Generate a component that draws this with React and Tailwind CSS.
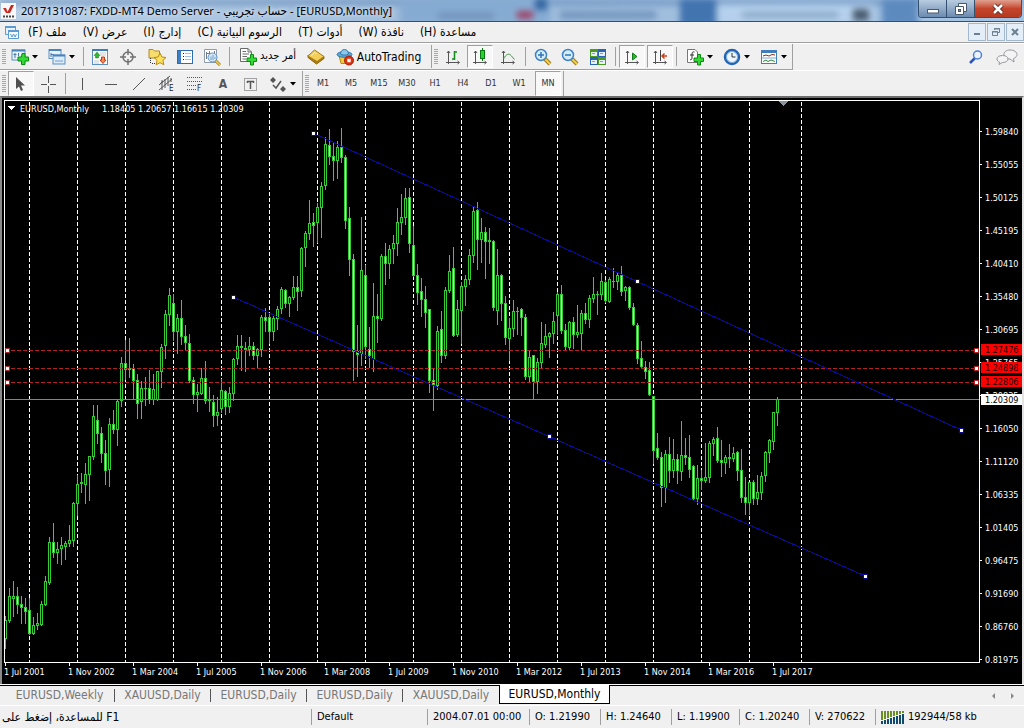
import React from 'react';

// [high, body top, body bottom, low, bearish] for each month, oldest first
const candles = [
  [616, 620, 638, 648, 0], [588, 596, 620, 622, 0], [581, 596, 598, 616, 0], [587, 596, 604, 613, 1],
  [596, 604, 607, 623, 1], [598, 607, 611, 623, 1], [598, 610, 633, 634, 1], [617, 625, 633, 634, 0],
  [613, 623, 625, 629, 0], [601, 604, 624, 625, 0], [576, 581, 604, 605, 0], [537, 542, 582, 584, 0],
  [523, 542, 552, 557, 1], [542, 549, 552, 563, 0], [537, 545, 548, 564, 0], [541, 543, 546, 559, 0],
  [525, 540, 543, 546, 0], [502, 503, 540, 546, 0], [475, 484, 503, 515, 0], [473, 482, 483, 492, 1],
  [463, 474, 484, 503, 0], [456, 456, 474, 500, 0], [405, 416, 456, 459, 0], [405, 420, 433, 443, 1],
  [427, 433, 453, 462, 1], [440, 453, 470, 484, 1], [418, 424, 469, 486, 0], [410, 424, 429, 433, 1],
  [400, 401, 429, 445, 0], [357, 363, 400, 406, 0], [340, 363, 369, 379, 1], [338, 368, 369, 377, 1],
  [364, 368, 380, 399, 1], [374, 380, 403, 418, 1], [381, 388, 401, 418, 0], [377, 388, 388, 405, 1],
  [370, 388, 399, 403, 1], [374, 389, 399, 404, 0], [371, 371, 399, 400, 0], [344, 347, 371, 387, 0],
  [310, 314, 345, 358, 0], [288, 295, 314, 325, 0], [294, 303, 331, 340, 1], [314, 318, 331, 353, 0],
  [300, 318, 336, 344, 1], [325, 336, 342, 350, 1], [334, 343, 380, 382, 1], [377, 380, 394, 403, 1],
  [384, 392, 394, 411, 0], [368, 378, 393, 394, 0], [361, 378, 400, 403, 1], [387, 399, 400, 411, 1],
  [395, 402, 415, 426, 1], [397, 412, 415, 425, 0], [379, 390, 408, 412, 0], [390, 391, 406, 414, 1],
  [387, 393, 406, 412, 0], [358, 359, 393, 400, 0], [335, 346, 358, 364, 0], [335, 346, 347, 370, 1],
  [342, 348, 349, 371, 1], [337, 346, 349, 355, 0], [342, 346, 355, 359, 1], [348, 349, 355, 368, 0],
  [315, 317, 349, 356, 0], [308, 317, 320, 331, 1], [313, 317, 331, 343, 1], [316, 318, 331, 340, 0],
  [306, 309, 318, 329, 0], [287, 289, 308, 313, 0], [289, 290, 303, 307, 1], [296, 297, 303, 316, 0],
  [276, 287, 297, 299, 0], [276, 287, 291, 310, 1], [247, 248, 290, 296, 0], [231, 233, 247, 266, 0],
  [200, 223, 233, 239, 0], [213, 222, 225, 246, 1], [203, 207, 222, 242, 0], [182, 186, 207, 237, 0],
  [137, 144, 185, 189, 0], [129, 145, 156, 164, 1], [143, 156, 160, 180, 1], [141, 147, 160, 178, 0],
  [128, 147, 157, 162, 1], [155, 157, 220, 228, 1], [207, 218, 259, 275, 1], [254, 259, 351, 380, 1],
  [325, 351, 354, 376, 1], [217, 270, 353, 365, 0], [265, 275, 346, 358, 1], [327, 349, 355, 367, 1],
  [283, 316, 358, 371, 0], [294, 316, 318, 342, 1], [254, 256, 318, 320, 0], [243, 256, 263, 284, 1],
  [245, 249, 263, 278, 0], [235, 243, 248, 263, 0], [208, 222, 243, 255, 0], [194, 217, 222, 234, 0],
  [188, 198, 217, 224, 0], [188, 197, 243, 252, 1], [226, 245, 275, 276, 1], [264, 275, 292, 304, 1],
  [278, 291, 299, 316, 1], [286, 299, 312, 327, 1], [309, 309, 380, 392, 1], [369, 380, 384, 410, 1],
  [326, 331, 385, 389, 0], [311, 329, 355, 362, 1], [287, 290, 355, 358, 0], [255, 271, 290, 292, 0],
  [247, 268, 335, 336, 1], [300, 309, 334, 336, 0], [282, 286, 310, 343, 0], [275, 279, 286, 305, 0],
  [249, 255, 279, 284, 0], [207, 211, 255, 262, 0], [202, 210, 239, 269, 1], [218, 232, 239, 262, 0],
  [227, 232, 241, 278, 1], [228, 240, 241, 263, 1], [240, 241, 307, 310, 1], [249, 275, 310, 324, 0],
  [274, 275, 303, 320, 1], [296, 303, 337, 344, 1], [318, 328, 338, 360, 0], [300, 311, 328, 336, 0],
  [307, 311, 311, 334, 1], [308, 309, 317, 335, 1], [314, 317, 376, 379, 1], [351, 357, 376, 382, 0],
  [355, 355, 381, 399, 1], [358, 362, 381, 393, 0], [322, 343, 362, 368, 0], [324, 336, 344, 347, 0],
  [332, 333, 336, 357, 0], [312, 321, 333, 343, 0], [292, 294, 315, 334, 0], [285, 294, 330, 333, 1],
  [324, 330, 346, 350, 1], [321, 322, 347, 350, 0], [317, 322, 334, 348, 1], [305, 332, 334, 337, 0],
  [310, 313, 333, 350, 0], [303, 313, 319, 323, 1], [295, 298, 319, 327, 0], [277, 294, 298, 302, 0],
  [291, 294, 294, 314, 1], [273, 281, 294, 299, 0], [280, 282, 300, 302, 1], [277, 279, 301, 302, 0],
  [268, 281, 281, 287, 1], [273, 275, 281, 289, 0], [266, 275, 291, 295, 1], [286, 287, 290, 300, 0],
  [286, 287, 307, 309, 1], [303, 307, 324, 325, 1], [323, 325, 358, 363, 1], [341, 358, 366, 368, 1],
  [361, 367, 371, 378, 1], [362, 370, 394, 395, 1], [396, 396, 450, 463, 1], [433, 448, 457, 459, 1],
  [452, 457, 487, 506, 1], [450, 454, 487, 502, 0], [437, 454, 470, 482, 1], [439, 459, 470, 477, 0],
  [454, 459, 470, 483, 1], [421, 455, 471, 480, 0], [438, 455, 457, 464, 1], [435, 457, 469, 477, 1],
  [465, 466, 498, 500, 1], [465, 478, 498, 504, 0], [470, 478, 480, 489, 1], [443, 477, 480, 482, 0],
  [441, 443, 477, 482, 0], [437, 439, 443, 455, 0], [427, 438, 460, 462, 1], [440, 460, 462, 476, 1],
  [455, 457, 462, 473, 0], [444, 457, 458, 467, 1], [447, 453, 458, 461, 0], [451, 452, 470, 480, 1],
  [449, 470, 497, 502, 1], [477, 497, 502, 514, 1], [482, 482, 502, 514, 0], [480, 482, 498, 504, 1],
  [475, 492, 498, 504, 0], [472, 476, 492, 499, 0], [451, 452, 475, 481, 0], [439, 440, 452, 462, 0],
  [412, 412, 441, 449, 0], [397, 399, 412, 425, 0],
];

const gridX = [29, 77, 125, 173, 221, 269, 317, 365, 413, 461, 509, 557, 605, 653, 701, 749, 801];

const prices = [
  '1.59840', '1.55055', '1.50125', '1.45195', '1.40410', '1.35480', '1.30695', '1.25765', '1.20835',
  '1.16050', '1.11120', '1.06335', '1.01405', '0.96475', '0.91690', '0.86760', '0.81975',
];

const dates = [
  '1 Jul 2001', '1 Nov 2002', '1 Mar 2004', '1 Jul 2005', '1 Nov 2006', '1 Mar 2008', '1 Jul 2009',
  '1 Nov 2010', '1 Mar 2012', '1 Jul 2013', '1 Nov 2014', '1 Mar 2016', '1 Jul 2017',
];

const levels = [
  { y: 350, price: '1.27476' },
  { y: 368, price: '1.24898' },
  { y: 382, price: '1.22806' },
];

const channels = [
  [[313, 133], [637, 281], [961, 430]],
  [[233, 297], [549, 436], [865, 576]],
];

const Chart = () => (
  <svg
    viewBox="2 98 1020 586"
    className="block w-full bg-black text-[9px] font-['DejaVu_Sans_Condensed','DejaVu_Sans',sans-serif]"
    role="img"
    aria-label="EURUSD monthly chart"
  >
    <g shapeRendering="crispEdges">
      {gridX.map((x) => (
        <line key={x} x1={x + 0.5} x2={x + 0.5} y1="102" y2="662" stroke="#fff" strokeDasharray="4 2" />
      ))}
      {candles.map(([high, top, bottom, low, bear], i) => {
        const x = 5 + i * 4;
        return (
          <g key={x}>
            <rect x={x} y={high} width="1" height={low - high + 1} fill="#46c846" />
            <rect x={x - 1} y={top} width="3" height={bottom - top + 1} fill="#32cd32" />
            {bottom - top > 1 && (
              <rect x={x} y={top + 1} width="1" height={bottom - top - 1} fill={bear ? '#c4f5c0' : '#000'} />
            )}
          </g>
        );
      })}
      {levels.map(({ y }) => (
        <line key={y} x1="5" x2="979" y1={y + 0.5} y2={y + 0.5} stroke="#b22222" strokeDasharray="4 2" />
      ))}
      <rect x="5" y="399" width="974" height="1" fill="#778899" />
      {channels.map(([a, , c]) => (
        <line key={a[0]} x1={a[0]} y1={a[1]} x2={c[0]} y2={c[1]} stroke="#0a0aa8" />
      ))}
      {channels.flat().map(([x, y]) => (
        <g key={x}>
          <rect x={x - 2} y={y - 2} width="5" height="5" fill="#0a0a9a" />
          <rect x={x - 1} y={y - 1} width="3" height="3" fill="#fff" />
        </g>
      ))}
      {levels.map(({ y }) => (
        <g key={y} fill="#fff">
          <rect x="5" y={y - 2} width="5" height="5" fill="#b22222" />
          <rect x="6" y={y - 1} width="3" height="3" />
          <rect x="974" y={y - 2} width="5" height="5" fill="#b22222" />
          <rect x="975" y={y - 1} width="3" height="3" />
        </g>
      ))}
      <path d="M4.5 662.5V100.5H979.5V662.5Z" fill="none" stroke="#fff" />
      <path d="M778 101H788L783 106Z" fill="#8a939c" />
      <path d="M8 106H15L11.5 110Z" fill="#fff" />
      {dates.map((d, i) => (
        <rect key={d} x={5 + i * 64} y="663" width="1" height="3" fill="#fff" />
      ))}
      {prices.map((p, i) => (
        <rect key={p} x="980" y={131 + i * 33} width="2" height="1" fill="#fff" />
      ))}
    </g>
    <g fill="#fff">
      <text x="20" y="112">EURUSD,Monthly</text>
      <text x="102" y="112">1.18405 1.20657 1.16615 1.20309</text>
      {dates.map((d, i) => (
        <text key={d} x={4 + i * 64} y="675">{d}</text>
      ))}
      {prices.map((p, i) => (
        <text key={p} x="985" y={135 + i * 33}>{p}</text>
      ))}
    </g>
    {levels.map(({ y, price }) => (
      <g key={y}>
        <rect x="981" y={y - 6} width="41" height="11" fill="#f00" />
        <text x="985" y={y + 3} fill="#200">{price}</text>
      </g>
    ))}
    <rect x="981" y="394" width="41" height="11" fill="#fff" />
    <text x="985" y="403" fill="#000">1.20309</text>
  </svg>
);

const Icon = ({ children }) => (
  <svg width="18" height="18" viewBox="0 0 18 18" fill="none" className="shrink-0" aria-hidden="true">
    {children}
  </svg>
);

const Caret = () => (
  <svg width="6" height="4" viewBox="0 0 6 4" className="shrink-0" aria-hidden="true">
    <path d="M0 0H6L3 3.5Z" fill="#000" />
  </svg>
);

const Plus = () => (
  <path d="M11.5 6.5H14.5V10H17.5V13.5H14.5V17H11.5V13.5H8V10H11.5Z" fill="#35d935" stroke="#0a8a12" />
);

const Axes = () => (
  <path d="M4.5 3V16M3 5L4.5 3L6 5M2 14.5H15M13.5 13L15.5 14.5L13.5 16" stroke="#555" />
);

const Lens = () => (
  <>
    <path d="M11 11L16 16" stroke="#9a7a20" strokeWidth="4" />
    <path d="M11 11L16 16" stroke="#f2d04a" strokeWidth="2" />
    <circle cx="7" cy="7" r="5.5" fill="#d5ecfb" stroke="#3f82c4" strokeWidth="1.5" />
  </>
);

const icons = {
  newChart: (
    <Icon>
      <rect x="1" y="2" width="13" height="10" fill="#e8f2fb" stroke="#5b8fc0" />
      <path d="M1 2.5H14" stroke="#4a84bd" strokeWidth="2" />
      <path d="M4 5V10M2.5 6.5H5.5M7.5 5V8" stroke="#4a78a8" />
      <path d="M11 5.5H14V9H17.5V13H14V16.5H10.5V13H7V9H10.5Z" fill="#35d935" stroke="#0a8a12" />
    </Icon>
  ),
  profiles: (
    <Icon>
      <rect x="1" y="1.5" width="12" height="9" fill="#e8f2fb" stroke="#5b8fc0" />
      <path d="M1 2H13" stroke="#4a84bd" strokeWidth="2" />
      <path d="M3 5V9M3 6.5H6" stroke="#4a78a8" />
      <rect x="5" y="7" width="12" height="9" fill="#dcebf8" stroke="#5b8fc0" />
      <path d="M5 7.5H17" stroke="#4a84bd" strokeWidth="2" />
      <path d="M7 13H15" stroke="#6d9fce" />
    </Icon>
  ),
  market: (
    <Icon>
      <rect x="1.5" y="1.5" width="15" height="15" fill="#fff" stroke="#5b8fc0" />
      <path d="M1 2H17" stroke="#3b7dbd" strokeWidth="2" />
      <path d="M9 7H15M9 5H15M3 13H8M3 15H8" stroke="#c5ccd2" />
      <path d="M6 4L9 7.5H7.5V10H4.5V7.5H3Z" fill="#2db82d" stroke="#13801a" strokeWidth=".5" />
      <path d="M12 15.5L15 12H13.5V9H10.5V12H9Z" fill="#f58a5c" stroke="#c03c14" />
    </Icon>
  ),
  target: (
    <Icon>
      <circle cx="9" cy="9" r="5" stroke="#707070" strokeWidth="1.5" />
      <path d="M9 1V7M9 11V17M1 9H7M11 9H17" stroke="#707070" strokeWidth="1.5" />
    </Icon>
  ),
  favorites: (
    <Icon>
      <path d="M1 1.5H5L6.500 3H11.5V10H1Z" fill="#f8dd6c" stroke="#b08a20" />
      <path d="M2.5 10V15.5M4 15.5H8" stroke="#333" strokeDasharray="1 1" />
      <path d="M12 5L13.9 9L18 9.5L15 12.3L15.8 16.8L12 14.6L8.2 16.8L9 12.3L6 9.5L10.1 9Z" fill="#ffe25c" stroke="#b88a14" />
    </Icon>
  ),
  navigator: (
    <Icon>
      <rect x="1.5" y="2.5" width="15" height="13" fill="#fff" stroke="#2f6db0" />
      <rect x="2" y="3" width="3" height="12" fill="#3f7fc4" />
      <path d="M7 5.5H8M7 8.5H8M7 11.5H8" stroke="#222" />
      <path d="M9 5.5H15M9 8.5H15M9 11.5H15" stroke="#9cc0e6" />
    </Icon>
  ),
  tester: (
    <Icon>
      <path d="M1.5 1.5H13.5V14.5H1.5Z" fill="#fff" stroke="#8c9cab" />
      <path d="M3.5 11V4M6.5 6V3M3 5.5H6M11.5 3V6" stroke="#6f7d8a" />
      <path d="M12 12L17 17" stroke="#9a7a20" strokeWidth="3" />
      <path d="M12 12L17 17" stroke="#f2d04a" strokeWidth="1.5" />
      <circle cx="9.5" cy="9.5" r="4.5" fill="#cfe6f8" stroke="#5a92c8" />
      <path d="M8 12V8.5M10 12V7M12 11V9" stroke="#7aa0c2" />
    </Icon>
  ),
  newOrder: (
    <Icon>
      <path d="M1.5 .5H9L12.5 4V13.5H1.5Z" fill="#fff" stroke="#6a6a6a" />
      <path d="M9 .5V4H12.5M3.5 3.5H7M3.5 6H10M3.5 8.5H8M3.5 11H7" stroke="#6a6a6a" />
      <Plus />
    </Icon>
  ),
  editor: (
    <Icon>
      <path d="M1 9.5L9.500 16L17 10.5V8.5L9 13L1 7Z" fill="#b07c10" stroke="#8e640a" />
      <path d="M1 8L7.5 2L17 8.500L10 13.5Z" fill="#f4cf58" stroke="#a87a12" />
      <path d="M4 8L7.5 4.5L10 6" stroke="#fff0b0" />
    </Icon>
  ),
  auto: (
    <Icon>
      <path d="M3 7.5L5 15.5H12L15 7.5Z" fill="#f0c844" stroke="#b58a1a" />
      <ellipse cx="8.5" cy="6.5" rx="7.5" ry="2.8" fill="#5fa8d8" stroke="#2f78ad" />
      <path d="M4.5 6C4.5 0 12.5 0 12.5 6C10 7.5 7 7.5 4.5 6Z" fill="#8cc8ec" stroke="#2f78ad" />
      <circle cx="13" cy="12.5" r="4.5" fill="#dc3214" stroke="#a01c08" />
      <rect x="11.3" y="10.8" width="3.4" height="3.4" fill="#fff" />
    </Icon>
  ),
  bars: (
    <Icon>
      <Axes />
      <path d="M10.5 3V12M10.5 4H13M8 11H10.5" stroke="#138a1a" strokeWidth="1.5" />
    </Icon>
  ),
  candlesIcon: (
    <Icon>
      <Axes />
      <path d="M11.5 0V13" stroke="#0b7a12" />
      <rect x="9.5" y="2.5" width="4" height="8" fill="#20d630" stroke="#0b7a12" />
    </Icon>
  ),
  line: (
    <Icon>
      <Axes />
      <path d="M4.5 11C7 6 10 5 12 7.5L15.5 11.5" stroke="#3b9440" />
    </Icon>
  ),
  zoomIn: (
    <Icon>
      <Lens />
      <path d="M4 7H10M7 4V10" stroke="#2f74b8" strokeWidth="1.5" />
    </Icon>
  ),
  zoomOut: (
    <Icon>
      <Lens />
      <path d="M4 7H10" stroke="#2f74b8" strokeWidth="1.5" />
    </Icon>
  ),
  tile: (
    <Icon>
      <rect x="1" y="1" width="8" height="8" fill="#4b9b22" />
      <rect x="9" y="1" width="8" height="8" fill="#2a64b4" />
      <rect x="1" y="9" width="8" height="8" fill="#2a64b4" />
      <rect x="9" y="9" width="8" height="8" fill="#4b9b22" />
      <path d="M2 4H8V8H2ZM10 4H16V8H10ZM2 12H8V16H2ZM10 12H16V16H10Z" fill="#e6f0f6" />
      <path d="M3 5.5H6M11 5.5H14M3 13.5H6M11 13.5H14" stroke="#7ba4b8" />
    </Icon>
  ),
  scroll: (
    <Icon>
      <Axes />
      <path d="M9.5 5V12L14 8.5Z" fill="#2cb52c" stroke="#10801a" />
    </Icon>
  ),
  shift: (
    <Icon>
      <Axes />
      <path d="M9.5 2V13" stroke="#444" />
      <path d="M16 8H11M13.5 5.5L11 8L13.5 10.5" stroke="#c8401c" strokeWidth="1.5" />
    </Icon>
  ),
  indicators: (
    <Icon>
      <path d="M1.5 1.5H9L11.5 4V14.5H1.5Z" fill="#fff" stroke="#777" />
      <path d="M8.5 4C6.5 3.5 6 4.5 6 6V10C6 11.5 5 12 4 11.5M4 7H8" stroke="#333" />
      <Plus />
    </Icon>
  ),
  clock: (
    <Icon>
      <circle cx="9" cy="9" r="7" fill="#eef6fd" stroke="#2464b0" strokeWidth="2.5" />
      <circle cx="9" cy="9" r="5.5" stroke="#7ab0e4" />
      <path d="M9 5V9H12.5" stroke="#333" />
    </Icon>
  ),
  template: (
    <Icon>
      <rect x="1.5" y="2.5" width="15" height="13" fill="#fff" stroke="#3f7dbd" />
      <path d="M1 3.5H17" stroke="#3f7dbd" strokeWidth="3" />
      <path d="M2 10H16" stroke="#7fa9d2" />
      <path d="M3 8L6 7L9 8L12 6.5L15 7" stroke="#8b2a1c" />
      <path d="M3 13.5L6 12L8 13.5L11 12L15 13.5" stroke="#2a8a3a" />
    </Icon>
  ),
  cursor: (
    <Icon>
      <path d="M4 2V14L7 11.5L9 16L11 15L9 10.5H13Z" fill="#505050" />
    </Icon>
  ),
  cross: (
    <Icon>
      <path d="M9.5 1V8M9.5 11V18M2 9.5H8M11 9.5H17" stroke="#555" />
    </Icon>
  ),
  vline: <Icon><path d="M8.5 3V15" stroke="#555" /></Icon>,
  hline: <Icon><path d="M3 9.5H15" stroke="#555" /></Icon>,
  trend: <Icon><path d="M3 15L15 3" stroke="#555" /></Icon>,
  channel: (
    <Icon>
      <path d="M1 10L12 1M1 15L14 4M4 5V15M7 4V13M10 2V11M13 3V7M2 9L5 6" stroke="#555" />
      <text x="11" y="16" className="text-[8px]" fill="#222">E</text>
    </Icon>
  ),
  fibo: (
    <Icon>
      <path d="M1 2.5H16M1 6.5H16M1 10.5H10M1 14.5H10" stroke="#555" strokeDasharray="1 1" />
      <text x="11" y="16" className="text-[8px]" fill="#222">F</text>
    </Icon>
  ),
  label: (
    <Icon>
      <rect x="2.5" y="3.5" width="12" height="12" stroke="#555" strokeDasharray="1 1" />
      <path d="M5 6.5H12M8.5 6V14M5.5 6V8M11.5 6V8" stroke="#555" strokeWidth="1.5" />
    </Icon>
  ),
  arrows: (
    <Icon>
      <path d="M4 2L7 5L4 8L1 5ZM14 11L17 14L14 17L11 14Z" fill="#555" />
      <path d="M4 10L7 13L12 6" stroke="#555" strokeWidth="1.5" />
    </Icon>
  ),
};

const pressed = 'border border-[#a0a0a0] border-r-white border-b-white bg-[#f8f8f8]';

const Tool = ({ icon, label, caret, active, className = 'w-7', children }) => (
  <button
    type="button"
    aria-label={label}
    className={`flex shrink-0 items-center justify-center gap-[3px] whitespace-nowrap ${active ? pressed : ''} ${className}`}
  >
    {icon && icons[icon]}
    {children}
    {caret && <Caret />}
  </button>
);

const Grip = () => (
  <div className="ml-[2px] w-1 shrink-0 self-stretch my-[4px] bg-[repeating-linear-gradient(#a8a8a8_0_1px,#f0f0f0_1px_2px)]" />
);

const Sep = () => <div className="mx-[3px] w-px shrink-0 self-stretch my-[2px] bg-[#a0a0a0]" />;

const timeframes = ['M1', 'M5', 'M15', 'M30', 'H1', 'H4', 'D1', 'W1'];

const menus = ['ملف (F)', 'عرض (V)', 'إدارج (I)', 'الرسوم البيانية (C)', 'أدوات (T)', 'نافذة (W)', 'مساعدة (H)'];

const TitleBar = () => (
  <header className="relative flex h-[22px] items-center overflow-hidden border-b border-[#33506f] bg-linear-to-r from-[#b9cfe6] via-[#9dbbdb] via-45% to-[#a5c3e2]">
    <div className="absolute inset-0 blur-[3px]" aria-hidden="true">
      <div className="h-[5px] bg-[#3f6ea6]/50" />
      <div className="absolute top-[-4px] left-[400px] h-7 w-[150px] bg-[#86abd2]" />
      <div className="absolute top-[-2px] left-[535px] h-[12px] w-3 bg-[#3465a0]" />
      <div className="absolute top-[11px] left-[517px] h-2 w-4 bg-[#a04468]" />
      <div className="absolute top-[12px] left-[438px] h-2 w-14 bg-[#7496be]" />
      <div className="absolute top-[11px] left-[560px] h-2 w-24 bg-[#7496be]" />
      <div className="absolute top-[-2px] left-[680px] h-7 w-9 bg-[#4274b0]" />
      <div className="absolute top-[4px] left-[718px] h-5 w-[155px] bg-[#b5d0ec]" />
      <div className="absolute top-[12px] left-[742px] h-1.5 w-24 bg-[#8aa8c8]" />
      <div className="absolute top-[9px] left-[853px] h-3 w-4 bg-[#4a5c70]" />
      <div className="absolute top-[-2px] left-[882px] h-7 w-9 bg-[#5c8abf]" />
    </div>
    <svg width="15" height="16" viewBox="0 0 15 16" className="relative ml-[1px]" aria-hidden="true">
      <rect width="15" height="16" fill="#f8f8f8" />
      <path d="M2 5L5 10L7 10L5 5ZM6 10L9 10L13 2H10Z" fill="#c8281e" />
      <path d="M2 13.5H13" stroke="#444" strokeWidth="2" strokeDasharray="2 1" />
    </svg>
    <h1 className="relative ml-[5px] whitespace-nowrap text-[11px] leading-4 text-black font-['Noto_Sans','DejaVu_Sans_Condensed',sans-serif] [text-shadow:0_0_4px_#fff]">
      2017131087: FXDD-MT4 Demo Server - <bdi className="text-[12px]">حساب تجريبي</bdi> - [EURUSD,Monthly]
    </h1>
    <div className="relative mr-[2px] ml-auto flex h-[18px] self-start overflow-hidden rounded-b border border-t-0 border-[#33506f]">
      <button type="button" aria-label="Minimize" className="flex w-7 items-center justify-center border-r border-[#33506f] bg-linear-to-b from-[#b9cce0] to-[#6b8bb0]">
        <svg width="12" height="12" viewBox="0 0 12 12"><rect x=".5" y="6.5" width="11" height="3.5" fill="#fff" stroke="#46586c" /></svg>
      </button>
      <button type="button" aria-label="Restore" className="flex w-7 items-center justify-center border-r border-[#33506f] bg-linear-to-b from-[#b9cce0] to-[#6b8bb0]">
        <svg width="14" height="14" viewBox="0 0 14 14">
          <path d="M4.5 1.5H12.5V9.5H4.5Z" fill="#fff" stroke="#46586c" />
          <path d="M1.5 4.5H9.5V12.5H1.5Z" fill="#fff" stroke="#46586c" />
          <rect x="4.5" y="7.5" width="2" height="2" fill="#7894b4" stroke="#46586c" />
        </svg>
      </button>
      <button type="button" aria-label="Close" className="flex w-[46px] items-center justify-center bg-linear-to-b from-[#e0a090] via-[#c4452c] to-[#b43a20]">
        <svg width="14" height="12" viewBox="0 0 14 12">
          <path d="M3 2L11 10M11 2L3 10" stroke="#5a2a26" strokeWidth="4.5" />
          <path d="M3 2L11 10M11 2L3 10" stroke="#fff" strokeWidth="2.5" />
        </svg>
      </button>
    </div>
  </header>
);

const MenuBar = () => (
  <nav className="flex h-[21px] items-center border-b border-[#a0a0a0]">
    <svg width="14" height="15" viewBox="0 0 14 15" fill="none" className="ml-[5px]" aria-hidden="true">
      <path d="M.5 1.5H10.5V9.5H.5Z" fill="#e8f2fb" stroke="#5b9bd0" />
      <path d="M0 2H11" stroke="#5b9bd0" strokeWidth="2" />
      <path d="M3.5 5.5H13.5V13.5H3.5Z" fill="#f4f9fd" stroke="#5b9bd0" />
      <path d="M3 6H14" stroke="#5b9bd0" strokeWidth="2" />
      <path d="M5.5 9L7 12L8.5 9L10 12L11.5 9" stroke="#5b9bd0" />
    </svg>
    <div className="ml-[9px] flex gap-4 text-[12px] leading-4">
      {menus.map((m) => (
        <button key={m} type="button" dir="rtl" className="whitespace-nowrap">{m}</button>
      ))}
    </div>
    <div className="ml-auto flex gap-[1px] text-[#6c8092]">
      <button type="button" aria-label="Minimize chart" className="flex h-[18px] w-[18px] items-center justify-center border border-[#a3b8cc] bg-[#e3eef9]">
        <svg width="8" height="8" viewBox="0 0 8 8"><path d="M1 6H7" stroke="currentColor" strokeWidth="2" /></svg>
      </button>
      <button type="button" aria-label="Restore chart" className="flex h-[18px] w-[18px] items-center justify-center border border-[#a3b8cc] bg-[#e3eef9]">
        <svg width="10" height="10" viewBox="0 0 10 10" fill="none" stroke="currentColor">
          <path d="M3.5 3V1.5H8.5V5.5H7M3 2H9M1.5 4.5H6.5V8.5H1.5ZM1 5H7" />
        </svg>
      </button>
      <button type="button" aria-label="Close chart" className="flex h-[18px] w-[18px] items-center justify-center border border-[#a3b8cc] bg-[#e3eef9]">
        <svg width="8" height="8" viewBox="0 0 8 8"><path d="M1 1L7 7M7 1L1 7" stroke="currentColor" strokeWidth="2" /></svg>
      </button>
    </div>
  </nav>
);

const MainToolbar = () => (
  <div className="flex h-[27px] justify-between border-t border-white">
    <div className="flex items-stretch border-r border-b border-[#a0a0a0] py-px">
      <Grip />
      <Tool icon="newChart" label="New chart" caret className="w-[37px]" />
      <Tool icon="profiles" label="Profiles" caret className="w-[37px]" />
      <Sep />
      <Tool icon="market" label="Market Watch" className="w-[26px]" />
      <Tool icon="target" label="Data Window" className="w-[30px]" />
      <Tool icon="favorites" label="Navigator" />
      <Tool icon="navigator" label="Terminal" className="w-[27px]" />
      <Tool icon="tester" label="Strategy Tester" />
      <Sep />
      <Tool icon="newOrder" className="w-[69px] text-[11px]"><span dir="rtl">أمر جديد</span></Tool>
      <Tool icon="editor" label="MetaEditor" />
      <Tool icon="auto" className="w-[97px] text-[12px]">AutoTrading</Tool>
      <div className="ml-[4px] w-px shrink-0 bg-[#a0a0a0]" />
      <Grip />
      <Tool icon="bars" label="Bar chart" className="w-[29px]" />
      <Tool icon="candlesIcon" label="Candlesticks" active className="w-[26px]" />
      <Tool icon="line" label="Line chart" className="w-[29px]" />
      <Sep />
      <Tool icon="zoomIn" label="Zoom in" className="w-[27px]" />
      <Tool icon="zoomOut" label="Zoom out" />
      <Tool icon="tile" label="Tile windows" />
      <Sep />
      <Tool icon="scroll" label="Auto scroll" active className="w-[26px]" />
      <Tool icon="shift" label="Chart shift" active className="ml-[2px] w-[26px]" />
      <Sep />
      <Tool icon="indicators" label="Indicators" caret className="w-[38px]" />
      <Tool icon="clock" label="Periods" caret className="w-[37px]" />
      <Tool icon="template" label="Templates" caret className="w-[37px]" />
    </div>
    <div className="mr-[6px] flex items-center gap-3">
      <button type="button" aria-label="Search">
        <svg width="16" height="16" viewBox="0 0 16 16" fill="none">
          <path d="M2 14L7 9" stroke="#2a55c0" strokeWidth="2.5" />
          <circle cx="9.5" cy="6" r="4" fill="#eef4ff" stroke="#4f80d8" strokeWidth="1.5" />
        </svg>
      </button>
      <button type="button" aria-label="Chat">
        <svg width="22" height="16" viewBox="0 0 22 16" fill="#f4f4f6" stroke="#96969e">
          <path d="M14 1C10 1 8 3 8 5.5C8 8 10 10 14 10L18 13L17.5 9.5C20 8.5 21 7 21 5.5C21 3 18 1 14 1Z" />
          <path d="M6.5 6.5C3 6.5 1 8 1 10C1 11.5 2 12.5 3.5 13L3 15.5L6.5 13.5C10 13.5 12 12 12 10C12 8 10 6.5 6.5 6.5Z" />
        </svg>
      </button>
    </div>
  </div>
);

const DrawToolbar = () => (
  <div className="flex h-[26px] border-t border-white text-[9px] text-[#333]">
    <Grip />
    <Tool icon="cursor" label="Cursor" active className="ml-[2px] w-[26px]" />
    <Tool icon="cross" label="Crosshair" />
    <Sep />
    <Tool icon="vline" label="Vertical line" />
    <Tool icon="hline" label="Horizontal line" />
    <Tool icon="trend" label="Trendline" />
    <Tool icon="channel" label="Equidistant channel" />
    <Tool icon="fibo" label="Fibonacci retracement" />
    <Tool label="Text" className="w-7 text-[12px] font-bold text-[#555]">A</Tool>
    <Tool icon="label" label="Text label" />
    <Tool icon="arrows" label="Arrows" caret className="w-[34px]" />
    <div className="ml-[3px] w-px bg-[#a0a0a0]" />
    <Grip />
    {timeframes.map((t) => (
      <Tool key={t}>{t}</Tool>
    ))}
    <Tool active className="ml-[2px] w-[26px]">MN</Tool>
    <div className="ml-[2px] w-px bg-[#a0a0a0]" />
  </div>
);

const tabs = ['EURUSD,Weekly', 'XAUUSD,Daily', 'EURUSD,Daily', 'EURUSD,Daily', 'XAUUSD,Daily'];

const TabBar = () => (
  <div className="flex h-5 items-start border-t border-black text-[12px] leading-[18px] text-[#777]">
    <div role="tablist" className="flex pl-[5px]">
      {tabs.map((t, i) => (
        <button
          key={i}
          type="button"
          role="tab"
          aria-selected="false"
          className={`flex items-center justify-center whitespace-nowrap ${i === 0 ? 'w-[110px]' : 'w-24'}`}
        >
          <span className="flex-1">{t}</span>
          {i < 4 && <span className="h-[13px] w-px bg-[#555]" />}
        </button>
      ))}
      <button type="button" role="tab" aria-selected="true" className="-mt-px h-[19px] w-[111px] whitespace-nowrap border border-t-0 border-black bg-white text-black">
        EURUSD,Monthly
      </button>
    </div>
    <div className="mr-[9px] ml-auto flex gap-[14px] self-center">
      <button type="button" aria-label="Previous tabs"><svg width="5" height="8" viewBox="0 0 5 8"><path d="M4 1V7L1 4Z" fill="#888" /></svg></button>
      <button type="button" aria-label="Next tabs"><svg width="5" height="8" viewBox="0 0 5 8"><path d="M1 1V7L4 4Z" fill="#888" /></svg></button>
    </div>
  </div>
);

const Cell = ({ className, children }) => (
  <div className={`flex shrink-0 items-center whitespace-nowrap border-l border-[#a0a0a0] pl-[5px] ${className}`}>{children}</div>
);

const StatusBar = () => (
  <footer className="flex h-[23px] border-t border-white py-[3px] text-[11px] leading-4">
    <p className="min-w-0 flex-1 whitespace-nowrap pl-[2px] text-[12px]">للمساعدة، إضغط على F1</p>
    <Cell className="w-[116px]">Default</Cell>
    <Cell className="w-[102px]">2004.07.01 00:00</Cell>
    <Cell className="w-[71px]">O: 1.21990</Cell>
    <Cell className="w-[71px]">H: 1.24640</Cell>
    <Cell className="w-[68px]">L: 1.19900</Cell>
    <Cell className="w-[70px]">C: 1.20240</Cell>
    <Cell className="w-[66px]">V: 270622</Cell>
    <Cell className="w-[149px] gap-[3px]">
      <svg width="24" height="14" viewBox="0 0 24 14" aria-hidden="true">
        {[0, 1, 2, 3, 4, 5, 6, 7].map((n) => (
          <g key={n}>
            <rect x={n * 3} y="1" width="2" height={9 - n} fill="#6b8e23" />
            <rect x={n * 3} y={11 - n} width="2" height={n + 3} fill="#0f4a6e" />
          </g>
        ))}
      </svg>
      192944/58 kb
    </Cell>
  </footer>
);

const App = () => {
  return (
    <div className="bg-[#f0f0f0] text-black font-['DejaVu_Sans_Condensed','DejaVu_Sans',sans-serif]">
      <TitleBar />
      <MenuBar />
      <MainToolbar />
      <DrawToolbar />
      <main className="border-t-2 border-r-2 border-l-2 border-t-[#6d6d6d] border-r-[#e3e3e3] border-l-[#8a8a8a]">
        <Chart />
      </main>
      <div className="h-px bg-white" />
      <TabBar />
      <StatusBar />
    </div>
  );
};

export default App;
